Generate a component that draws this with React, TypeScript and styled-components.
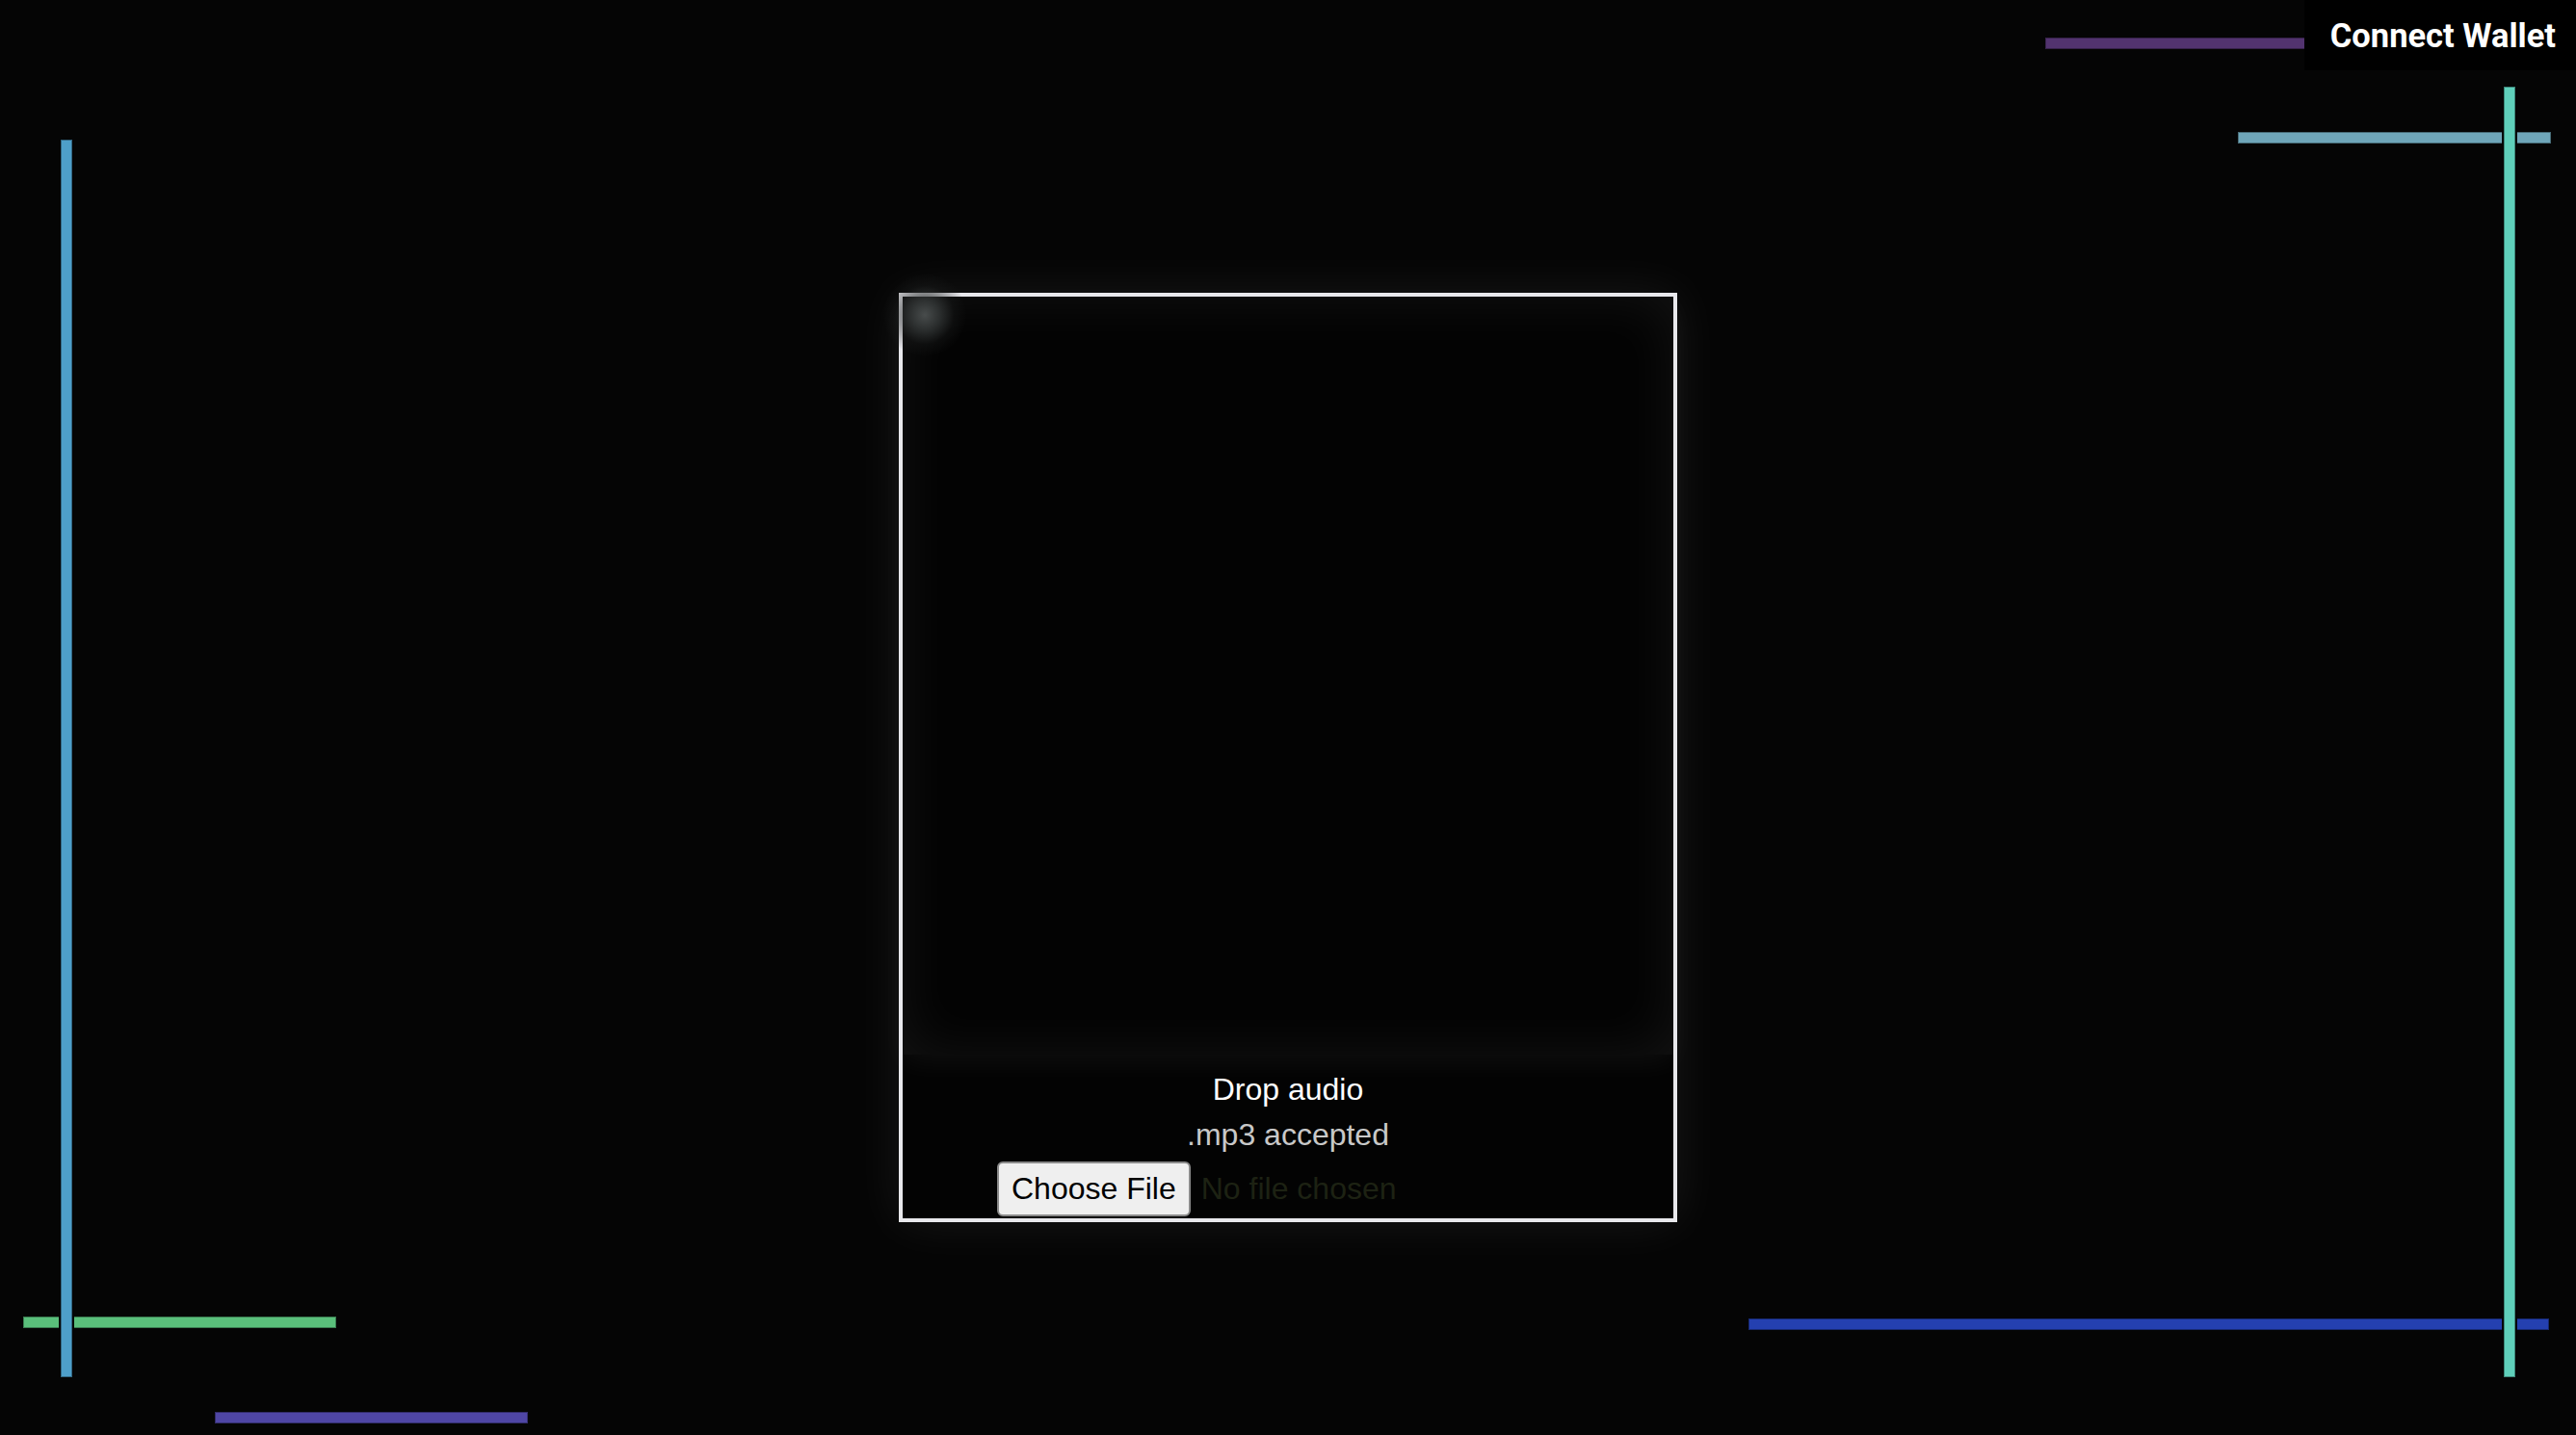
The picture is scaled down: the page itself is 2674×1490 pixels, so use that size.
import React from "react";
import styled, { createGlobalStyle } from "styled-components";

const GlobalStyle = createGlobalStyle`
  html, body {
    margin: 0;
    padding: 0;
    background: #050505;
  }
  * {
    box-sizing: border-box;
  }
`;

const Page = styled.div`
  position: relative;
  width: 100%;
  height: 100vh;
  min-height: 1490px;
  overflow: hidden;
  background: #050505;
  display: flex;
  flex-direction: column;
  font-family: "Liberation Sans", Arial, sans-serif;
`;

// decorative bars, each one sits on the free backdrop canvas
const Bar = styled.div<{ $color: string; $vertical?: boolean }>`
  position: absolute;
  background: ${(p) => p.$color};
  border: 1px solid rgba(0, 0, 0, 0.35);
  z-index: ${(p) => (p.$vertical ? 2 : 1)};
  box-shadow: ${(p) => (p.$vertical ? "0 0 0 2px #050505" : "none")};
`;

const Header = styled.header`
  position: relative;
  z-index: 5;
  display: flex;
  justify-content: flex-end;
  height: 73px;
`;

const ConnectButton = styled.button`
  height: 73px;
  padding: 0 21px 0 27px;
  border: none;
  background: #000;
  color: #fff;
  font-family: Roboto, "Liberation Sans", sans-serif;
  font-weight: 700;
  font-size: 34.5px;
  cursor: pointer;
`;

const Stage = styled.main`
  flex: 1;
  display: flex;
  justify-content: center;
  align-items: flex-start;
  padding-top: 231px;
`;

const Card = styled.section`
  position: relative;
  width: 808px;
  height: 965px;
  border: 4px solid #e8e8ec;
  background: #030303;
  box-shadow: 0 0 50px rgba(255, 255, 255, 0.08);
  display: flex;
  flex-direction: column;
`;

const GlowDot = styled.div`
  position: absolute;
  left: -20px;
  top: -24px;
  width: 86px;
  height: 86px;
  border-radius: 50%;
  background: radial-gradient(
    circle,
    rgba(72, 76, 76, 1) 0%,
    rgba(56, 60, 60, 0.75) 25%,
    rgba(30, 32, 32, 0.3) 50%,
    rgba(20, 22, 22, 0) 72%
  );
  pointer-events: none;
  z-index: 3;
`;

const Visualizer = styled.div`
  height: 787px;
  flex-shrink: 0;
  background: #030303;
  box-shadow:
    inset 0 0 60px rgba(255, 255, 255, 0.07),
    0 8px 28px rgba(255, 255, 255, 0.05);
`;

const DropArea = styled.div`
  display: flex;
  flex-direction: column;
  align-items: center;
  padding-top: 18px;
`;

const DropTitle = styled.div`
  color: #fff;
  font-size: 32px;
  line-height: 37px;
`;

const DropHint = styled.div`
  margin-top: 10px;
  color: #c8c8c8;
  font-size: 32px;
  line-height: 37px;
`;

const FileRow = styled.div`
  margin-top: 9px;
  width: 604px;
  display: flex;
  align-items: center;
  gap: 11px;
`;

const FileButton = styled.label`
  height: 57px;
  padding: 0 13px;
  display: flex;
  align-items: center;
  background: #efefef;
  border: 2px solid #8a8a8a;
  border-radius: 6px;
  color: #000;
  font-size: 32px;
  cursor: pointer;

  input {
    display: none;
  }
`;

const FileName = styled.span`
  color: #1d2213;
  font-size: 32px;
`;

const bars = [
  { color: "#52336f", left: 2123, top: 39, width: 325, height: 12 },
  { color: "#6fa6b9", left: 2323, top: 137, width: 325, height: 12 },
  { color: "#2440b0", left: 1815, top: 1369, width: 831, height: 12 },
  { color: "#5abf7b", left: 24, top: 1367, width: 325, height: 12 },
  { color: "#4f46a5", left: 223, top: 1466, width: 325, height: 12 },
  { color: "#5fcfba", left: 2599, top: 90, width: 12, height: 1340, vertical: true },
  { color: "#4e9fc9", left: 63, top: 145, width: 12, height: 1285, vertical: true },
];

const App: React.FC = () => {
  return (
    <Page>
      <GlobalStyle />
      {bars.map((b, i) => (
        <Bar
          key={i}
          $color={b.color}
          $vertical={b.vertical}
          style={{ left: b.left, top: b.top, width: b.width, height: b.height }}
        />
      ))}
      <Header>
        <ConnectButton>Connect Wallet</ConnectButton>
      </Header>
      <Stage>
        <Card>
          <GlowDot />
          <Visualizer />
          <DropArea>
            <DropTitle>Drop audio</DropTitle>
            <DropHint>.mp3 accepted</DropHint>
            <FileRow>
              <FileButton>
                Choose File
                <input type="file" accept=".mp3" />
              </FileButton>
              <FileName>No file chosen</FileName>
            </FileRow>
          </DropArea>
        </Card>
      </Stage>
    </Page>
  );
};

export default App;
